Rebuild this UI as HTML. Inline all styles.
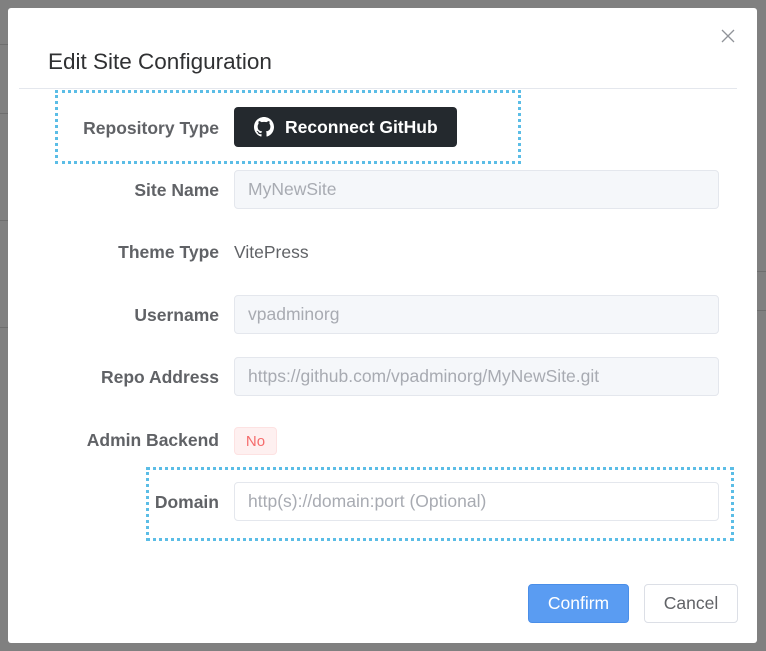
<!DOCTYPE html>
<html><head><style>
*{margin:0;padding:0;box-sizing:border-box}
body{width:766px;height:651px;background:#808080;position:relative;overflow:hidden;font-family:"Liberation Sans",Arial,sans-serif}
.ln{position:absolute;height:1px;background:#6e6e6e}
.dlg{position:absolute;left:8px;top:8px;width:749px;height:635px;background:#fff;border-radius:3px}
.title{position:absolute;left:48px;top:49px;font-size:22.5px;color:#303133}
.close{position:absolute;left:720px;top:28px}
.hr{position:absolute;left:19px;top:88px;width:718px;height:1px;background:#e4e7ed}
.dot{position:absolute;border:3px dotted #5bbde6}
.lab{position:absolute;right:547px;font-size:17.5px;font-weight:bold;color:#606266;line-height:20px}
.inp{position:absolute;left:234px;width:485px;height:39px;border:1px solid #e4e7ed;border-radius:4px;background:#f5f7fa;color:#a8abb2;font-size:17.5px;line-height:37px;padding-left:13px}
.gh{position:absolute;left:234px;top:107px;width:223px;height:40px;background:#24292e;border-radius:4px;color:#fff;font-weight:bold;font-size:17.5px;line-height:40px;padding-left:51px}
.tag{position:absolute;left:234px;top:427px;width:43px;height:28px;background:#fef0f0;border:1px solid #fde2e2;border-radius:4px;color:#f56c6c;font-size:15px;line-height:27px;text-align:center}
.btn{position:absolute;top:584px;height:39px;border-radius:4px;font-size:17.5px;line-height:37px;text-align:center}
</style></head><body>
<div class="ln" style="left:0;top:44px;width:8px"></div>
<div class="ln" style="left:0;top:113px;width:8px"></div>
<div class="ln" style="left:0;top:220px;width:8px"></div>
<div class="ln" style="left:0;top:327px;width:8px"></div>
<div class="ln" style="left:757px;top:271px;width:9px"></div>
<div class="ln" style="left:757px;top:310px;width:9px"></div>
<div class="dlg"></div>
<div class="title">Edit Site Configuration</div>
<svg class="close" width="16" height="16" viewBox="0 0 16 16"><path d="M2 2L14 14M14 2L2 14" stroke="#909399" stroke-width="1.3"/></svg>
<div class="hr"></div>
<div class="dot" style="left:55px;top:90px;width:466px;height:74px"></div>
<div class="dot" style="left:146px;top:467px;width:588px;height:74px"></div>
<div class="lab" style="top:118px">Repository Type</div>
<div class="gh"><svg style="position:absolute;left:20px;top:10px" width="20" height="20" viewBox="0 0 16 16"><path fill="#fff" d="M8 0C3.58 0 0 3.58 0 8c0 3.54 2.290 6.53 5.47 7.59.4.07.55-.17.55-.38 0-.19-.01-.82-.01-1.49-2.01.37-2.530-.49-2.690-.94-.09-.23-.48-.94-.82-1.13-.28-.15-.68-.52-.01-.53.63-.01 1.08.58 1.23.82.72 1.21 1.870.87 2.330.66.07-.52.28-.87.51-1.07-1.78-.2-3.64-.89-3.64-3.95 0-.87.31-1.59.82-2.15-.08-.2-.36-1.020.08-2.12 0 0 .67-.21 2.2.82.64-.18 1.32-.27 2-.27.68 0 1.36.09 2 .27 1.53-1.04 2.2-.82 2.2-.82.44 1.1.16 1.92.08 2.12.51.56.82 1.27.82 2.15 0 3.07-1.87 3.75-3.65 3.95.29.25.54.73.54 1.48 0 1.07-.01 1.93-.01 2.2 0 .21.15.46.55.38A8.013 8.013 0 0016 8c0-4.42-3.58-8-8-8z"/></svg>Reconnect GitHub</div>
<div class="lab" style="top:180px">Site Name</div>
<div class="inp" style="top:170px">MyNewSite</div>
<div class="lab" style="top:242px">Theme Type</div>
<div style="position:absolute;left:234px;top:242px;font-size:17.5px;color:#606266;line-height:20px">VitePress</div>
<div class="lab" style="top:305px">Username</div>
<div class="inp" style="top:295px">vpadminorg</div>
<div class="lab" style="top:367px">Repo Address</div>
<div class="inp" style="top:357px">https://github.com/vpadminorg/MyNewSite.git</div>
<div class="lab" style="top:430px">Admin Backend</div>
<div class="tag">No</div>
<div class="lab" style="top:492px">Domain</div>
<div class="inp" style="top:482px;background:#fff">http(s)://domain:port (Optional)</div>
<div class="btn" style="left:528px;width:101px;background:#5a9cf2;border:1px solid #4a8ee8;color:#fff">Confirm</div>
<div class="btn" style="left:644px;width:94px;background:#fff;border:1px solid #dcdfe6;color:#606266">Cancel</div>
</body></html>
